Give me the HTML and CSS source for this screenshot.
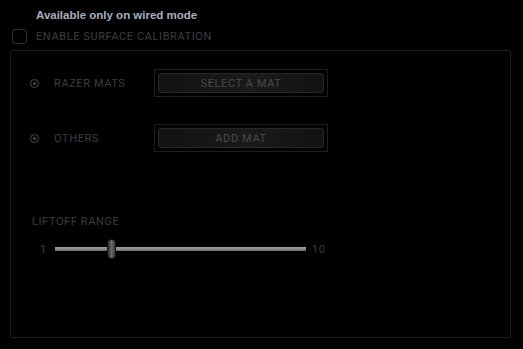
FILE: index.html
```html
<!DOCTYPE html>
<html lang="en">

<head>
  <meta charset="UTF-8">
  <title>Surface Calibration</title>
  <link rel="stylesheet" href="styles.css">
</head>

<body>
  <div class="calib">
    <div class="notice">Available only on wired mode</div>
    <label class="enable">
      <span class="check"></span>
      <span>ENABLE SURFACE CALIBRATION</span>
    </label>
    <div class="panel">
      <div class="row first">
        <span class="radio"></span>
        <span class="label">RAZER MATS</span>
        <div class="btn-frame">
          <button class="btn">SELECT A MAT</button>
        </div>
      </div>
      <div class="row">
        <span class="radio"></span>
        <span class="label">OTHERS</span>
        <div class="btn-frame">
          <button class="btn">ADD MAT</button>
        </div>
      </div>
      <div class="liftoff">
        <div class="title">LIFTOFF RANGE</div>
        <div class="slider">
          <span class="min">1</span>
          <div class="track">
            <span class="thumb" style="left: 53px"></span>
          </div>
          <span class="max">10</span>
        </div>
      </div>
    </div>
  </div>
</body>

</html>
```

FILE: styles.css
```css
html,
body {
  margin: 0;
  background: #000;
}

.calib {
  width: 523px;
  height: 349px;
  font-family: Roboto, "Liberation Sans", sans-serif;
  font-size: 11px;
  color: #3d3d3d;
  letter-spacing: 0.6px;
}

.notice {
  padding: 9px 0 0 36px;
  height: 13px;
  line-height: 13px;
  font-family: "Liberation Sans", Arial, sans-serif;
  font-weight: bold;
  font-size: 11.5px;
  letter-spacing: 0;
  color: #a9b0ba;
}

.enable {
  display: flex;
  align-items: center;
  margin-top: 6px;
  padding-left: 12px;
  height: 16px;
}

.enable .check {
  width: 13px;
  height: 13px;
  border: 1px solid #2e2e2e;
  border-radius: 3px;
  margin-right: 9px;
}

.panel {
  margin: 6px 0 0 10px;
  width: 501px;
  height: 288px;
  border: 1px solid #1d1d1d;
  border-radius: 2px;
  box-sizing: border-box;
}

.row {
  display: flex;
  align-items: center;
  height: 28px;
  margin-top: 27px;
  padding-left: 19px;
}

.row.first {
  margin-top: 18px;
}

.radio {
  width: 7px;
  height: 7px;
  border: 1px solid #4a4a4a;
  border-radius: 50%;
  position: relative;
  margin-right: 15px;
}

.radio::after {
  content: "";
  position: absolute;
  left: 2px;
  top: 2px;
  width: 3px;
  height: 3px;
  border-radius: 50%;
  background: #4a4a4a;
}

.row .label {
  width: 100px;
}

.btn-frame {
  width: 174px;
  height: 28px;
  border: 1px solid #1f1f1f;
  box-sizing: border-box;
  padding: 3px;
}

.btn {
  display: block;
  width: 100%;
  height: 100%;
  background: linear-gradient(90deg, #121212, #1a1a1a 55%, #121212);
  border: 1px solid #282828;
  border-radius: 3px;
  color: #4a4a4a;
  font: inherit;
  letter-spacing: 0.6px;
  padding: 0;
}

.liftoff {
  margin-top: 63px;
  padding-left: 21px;
}

.liftoff .title {
  height: 14px;
  line-height: 14px;
}

.slider {
  display: flex;
  align-items: center;
  margin-top: 11px;
  height: 18px;
}

.slider .min {
  width: 23px;
  text-align: center;
}

.slider .max {
  color: #3d3d3d;
}

.track {
  position: relative;
  width: 251px;
  height: 4px;
  background: linear-gradient(#a0a0a0, #8a8a8a 50%, #6a6a6a);
  margin-right: 6px;
}

.thumb {
  position: absolute;
  top: -7px;
  width: 7px;
  height: 18px;
  border-radius: 3px;
  background: linear-gradient(90deg, #2c2c2c, #6a6a6a 50%, #3a3a3a);
  box-shadow: 0 0 0 1px #111;
}
```
